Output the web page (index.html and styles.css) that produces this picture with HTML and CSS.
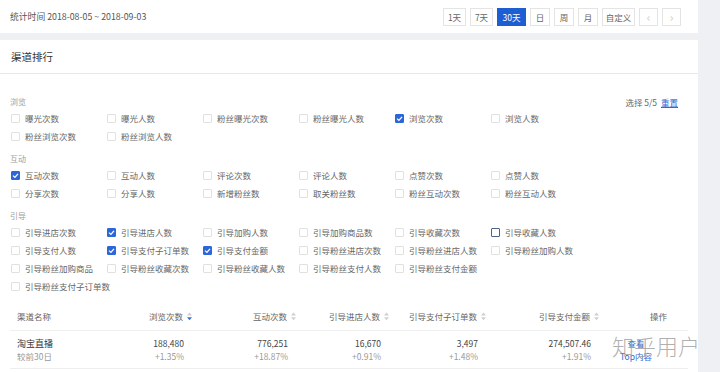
FILE: index.html
```html
<!DOCTYPE html>
<html lang="zh-CN">
<head>
<meta charset="utf-8">
<title>渠道排行</title>
<link rel="stylesheet" href="styles.css">
</head>
<body>
<div class="page">
  <div class="main">
    <header class="topbar">
      <div class="range">统计时间 2018-08-05 ~ 2018-09-03</div>
      <div class="btns">
        <button class="btn w23">1天</button>
        <button class="btn w23">7天</button>
        <button class="btn w29 active">30天</button>
        <button class="btn w20">日</button>
        <button class="btn w20">周</button>
        <button class="btn w20">月</button>
        <button class="btn w33">自定义</button>
        <button class="btn w19 arrow">&lsaquo;</button>
        <button class="btn w19 arrow">&rsaquo;</button>
      </div>
    </header>

    <section class="card">
      <div class="card-title">渠道排行</div>

      <div class="filters">
        <div class="group">
          <div class="group-head">
            <span class="group-label">浏览</span>
            <span class="sel">选择 5/5 <a class="reset">重置</a></span>
          </div>
          <div class="opts">
            <label class="opt"><span class="cb"></span>曝光次数</label>
            <label class="opt"><span class="cb"></span>曝光人数</label>
            <label class="opt"><span class="cb"></span>粉丝曝光次数</label>
            <label class="opt"><span class="cb"></span>粉丝曝光人数</label>
            <label class="opt"><span class="cb on"><svg viewBox="0 0 9 9"><polyline points="2,4.6 3.9,6.4 7,2.8"/></svg></span>浏览次数</label>
            <label class="opt"><span class="cb"></span>浏览人数</label>
            <label class="opt"><span class="cb"></span>粉丝浏览次数</label>
            <label class="opt"><span class="cb"></span>粉丝浏览人数</label>
          </div>
        </div>

        <div class="group">
          <div class="group-head"><span class="group-label">互动</span></div>
          <div class="opts">
            <label class="opt"><span class="cb on"><svg viewBox="0 0 9 9"><polyline points="2,4.6 3.9,6.4 7,2.8"/></svg></span>互动次数</label>
            <label class="opt"><span class="cb"></span>互动人数</label>
            <label class="opt"><span class="cb"></span>评论次数</label>
            <label class="opt"><span class="cb"></span>评论人数</label>
            <label class="opt"><span class="cb"></span>点赞次数</label>
            <label class="opt"><span class="cb"></span>点赞人数</label>
            <label class="opt"><span class="cb"></span>分享次数</label>
            <label class="opt"><span class="cb"></span>分享人数</label>
            <label class="opt"><span class="cb"></span>新增粉丝数</label>
            <label class="opt"><span class="cb"></span>取关粉丝数</label>
            <label class="opt"><span class="cb"></span>粉丝互动次数</label>
            <label class="opt"><span class="cb"></span>粉丝互动人数</label>
          </div>
        </div>

        <div class="group">
          <div class="group-head"><span class="group-label">引导</span></div>
          <div class="opts">
            <label class="opt"><span class="cb"></span>引导进店次数</label>
            <label class="opt"><span class="cb on"><svg viewBox="0 0 9 9"><polyline points="2,4.6 3.9,6.4 7,2.8"/></svg></span>引导进店人数</label>
            <label class="opt"><span class="cb"></span>引导加购人数</label>
            <label class="opt"><span class="cb"></span>引导加购商品数</label>
            <label class="opt"><span class="cb"></span>引导收藏次数</label>
            <label class="opt"><span class="cb hover"></span>引导收藏人数</label>
            <label class="opt"><span class="cb"></span>引导支付人数</label>
            <label class="opt"><span class="cb on"><svg viewBox="0 0 9 9"><polyline points="2,4.6 3.9,6.4 7,2.8"/></svg></span>引导支付子订单数</label>
            <label class="opt"><span class="cb on"><svg viewBox="0 0 9 9"><polyline points="2,4.6 3.9,6.4 7,2.8"/></svg></span>引导支付金额</label>
            <label class="opt"><span class="cb"></span>引导粉丝进店次数</label>
            <label class="opt"><span class="cb"></span>引导粉丝进店人数</label>
            <label class="opt"><span class="cb"></span>引导粉丝加购人数</label>
            <label class="opt"><span class="cb"></span>引导粉丝加购商品</label>
            <label class="opt"><span class="cb"></span>引导粉丝收藏次数</label>
            <label class="opt"><span class="cb"></span>引导粉丝收藏人数</label>
            <label class="opt"><span class="cb"></span>引导粉丝支付人数</label>
            <label class="opt"><span class="cb"></span>引导粉丝支付金额</label>
            <label class="opt newrow"><span class="cb"></span>引导粉丝支付子订单数</label>
          </div>
        </div>
      </div>

      <div class="table">
        <div class="th first">渠道名称</div>
        <div class="th num">浏览次数<svg class="sort" viewBox="0 0 5 9"><polygon class="up" points="0,3.6 2.5,0.6 5,3.6"/><polygon class="down active" points="0,5.2 5,5.2 2.5,8.2"/></svg></div>
        <div class="th num">互动次数<svg class="sort" viewBox="0 0 5 9"><polygon class="up" points="0,3.6 2.5,0.6 5,3.6"/><polygon class="down" points="0,5.2 5,5.2 2.5,8.2"/></svg></div>
        <div class="th num">引导进店人数<svg class="sort" viewBox="0 0 5 9"><polygon class="up" points="0,3.6 2.5,0.6 5,3.6"/><polygon class="down" points="0,5.2 5,5.2 2.5,8.2"/></svg></div>
        <div class="th num">引导支付子订单数<svg class="sort" viewBox="0 0 5 9"><polygon class="up" points="0,3.6 2.5,0.6 5,3.6"/><polygon class="down" points="0,5.2 5,5.2 2.5,8.2"/></svg></div>
        <div class="th num">引导支付金额<svg class="sort" viewBox="0 0 5 9"><polygon class="up" points="0,3.6 2.5,0.6 5,3.6"/><polygon class="down" points="0,5.2 5,5.2 2.5,8.2"/></svg></div>
        <div class="th op">操作</div>

        <div class="td first"><span class="name">淘宝直播</span><span class="sub">较前30日</span></div>
        <div class="td num"><span class="val">188,480</span><span class="sub">+1.35%</span></div>
        <div class="td num"><span class="val">776,251</span><span class="sub">+18.87%</span></div>
        <div class="td num"><span class="val">16,670</span><span class="sub">+0.91%</span></div>
        <div class="td num"><span class="val">3,497</span><span class="sub">+1.48%</span></div>
        <div class="td num"><span class="val">274,507.46</span><span class="sub">+1.91%</span></div>
        <div class="td op"><a class="link">查看</a><a class="link">Top内容</a></div>
      </div>
    </section>
  </div>
  <aside class="side"></aside>
</div>
<div class="watermark">知乎用户</div>
</body>
</html>
```

FILE: styles.css
```css
* { box-sizing: border-box; }

html, body {
  margin: 0;
  padding: 0;
  height: 372px;
  overflow: hidden;
  background: #eef0f4;
  font-family: "Noto Sans CJK SC", "Noto Sans", sans-serif;
  color: #666;
}

.page {
  display: flex;
  width: 720px;
  height: 372px;
}

.main {
  width: 698px;
  display: flex;
  flex-direction: column;
  gap: 7px;
}

.side {
  flex: 1;
  background: #eef0f4;
}

/* top bar */
.topbar {
  height: 33px;
  background: #fff;
  display: flex;
  align-items: center;
  justify-content: space-between;
  padding: 0 17px 0 10px;
}

.range {
  font-size: 8.8px;
  line-height: 12px;
  color: #555;
  margin-top: 1px;
}

.btns {
  display: flex;
  gap: 4px;
}

.btn {
  height: 18px;
  padding: 0;
  border: 1px solid #e4e4e4;
  background: #fff;
  color: #666;
  font-family: inherit;
  font-size: 8.5px;
  line-height: 16px;
  text-align: center;
}

.btn.active {
  background: #1d5fd3;
  border-color: #1d5fd3;
  color: #fff;
}

.btn.arrow {
  color: #ccc;
  font-size: 12px;
  line-height: 15px;
}

.w19 { width: 19px; }
.w20 { width: 20px; }
.w23 { width: 23px; }
.w29 { width: 29px; }
.w33 { width: 33px; }

/* card */
.card {
  flex: 1;
  background: #fff;
}

.card-title {
  height: 34px;
  border-bottom: 1px solid #e6e8eb;
  padding-left: 11px;
  font-size: 10.5px;
  line-height: 33px;
  color: #333;
}

.filters {
  padding: 21px 20px 0 10px;
  display: flex;
  flex-direction: column;
  gap: 7px;
}

.group-head {
  display: flex;
  justify-content: space-between;
  align-items: center;
  height: 14px;
}

.group-label {
  font-size: 8px;
  line-height: 14px;
  color: #a0a0a0;
}

.sel {
  font-size: 8.5px;
  line-height: 14px;
  color: #666;
}

.reset {
  color: #2f6bd6;
  text-decoration: underline;
  margin-left: 2px;
}

.opts {
  display: grid;
  grid-template-columns: repeat(6, 96px);
}

.opt {
  display: flex;
  align-items: center;
  height: 18px;
  padding-left: 1px;
  font-size: 8.5px;
  color: #666;
  white-space: nowrap;
}

.opt.newrow { grid-column: 1; }

.cb {
  width: 9px;
  height: 9px;
  border: 1px solid #e0e0e0;
  border-radius: 1px;
  margin-right: 5px;
  flex: none;
  display: flex;
  align-items: center;
  justify-content: center;
}

.cb.on {
  background: #2d66d8;
  border-color: #2d66d8;
}

.cb.on svg {
  width: 9px;
  height: 9px;
  margin: -1px;
}

.cb.on polyline {
  fill: none;
  stroke: #fff;
  stroke-width: 1.3;
}

.cb.hover {
  border-color: #4a6585;
}

/* table */
.table {
  margin: 7px 0 0 10px;
  display: grid;
  grid-template-columns: 100px 83px 104px 93px 97px 113px 88px;
}

.th {
  height: 29px;
  border-bottom: 1px solid #f0f0f0;
  display: flex;
  align-items: center;
  font-size: 8.5px;
  color: #666;
  white-space: nowrap;
}

.th.first { padding-left: 7px; }
.th.num { justify-content: flex-end; padding-right: 1px; }
.th.op { justify-content: flex-end; padding-right: 21px; }

.sort {
  width: 5px;
  height: 9px;
  margin-left: 4px;
}

.sort polygon { fill: #d0d0d0; }
.sort polygon.active { fill: #3d6fd6; }

.td {
  height: 38px;
  border-bottom: 1px solid #eeeeee;
  display: flex;
  flex-direction: column;
  justify-content: center;
  font-size: 8.5px;
  line-height: 13px;
  white-space: nowrap;
}

.td.first { padding-left: 7px; }
.td.num { align-items: flex-end; padding-right: 9px; }
.td.op { align-items: center; padding-right: 16px; }

.name { color: #333; font-size: 9px; }
.val { color: #444; }
.sub { color: #999; }

.link {
  color: #2f6bd6;
}

.watermark {
  position: absolute;
  left: 612px;
  top: 332px;
  font-family: "Noto Sans CJK SC", sans-serif;
  font-size: 22px;
  line-height: 26px;
  font-weight: 300;
  color: rgba(150, 150, 150, 0.75);
  pointer-events: none;
}
```
